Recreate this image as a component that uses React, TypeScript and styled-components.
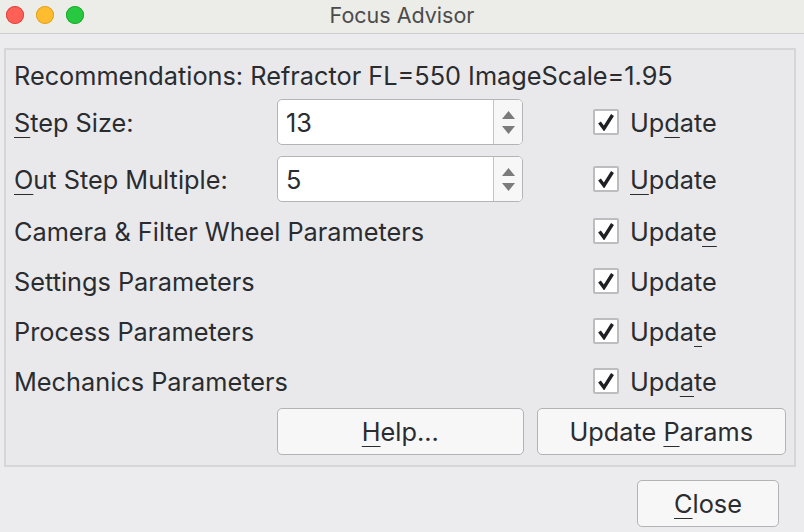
import React from 'react';
import styled, { createGlobalStyle } from 'styled-components';

const Global = createGlobalStyle`
  html, body { margin: 0; padding: 0; background: #ececee; }
  body { font-family: Inter, "Liberation Sans", sans-serif; }
  * { box-sizing: border-box; }
`;

const Window = styled.div`
  width: 804px;
  height: 532px;
  background: #ececee;
  display: flex;
  flex-direction: column;
  overflow: hidden;
  color: #2a2c30;
`;

const TitleBar = styled.div`
  position: relative;
  height: 34px;
  flex: none;
  background: #ececE8;
  border-bottom: 1px solid #cdcdcd;
  display: flex;
  align-items: center;
  justify-content: center;
`;

const Lights = styled.div`
  position: absolute;
  left: 6px;
  top: 6px;
  display: flex;
  gap: 12px;
`;

const Light = styled.span<{ $c: string; $b: string }>`
  width: 18px;
  height: 18px;
  border-radius: 50%;
  background: ${(p) => p.$c};
  box-shadow: inset 0 0 0 1px ${(p) => p.$b};
`;

const Title = styled.div`
  font-size: 21.5px;
  color: #4b4b4b;
  margin-top: -3px;
`;

const Body = styled.div`
  flex: 1;
  display: flex;
  flex-direction: column;
  padding: 14px 8px 0 4px;
`;

const Group = styled.div`
  border: 2px solid #d6d6d8;
  background: #e9e9eb;
  padding: 0 8px 10px 8px;
  display: flex;
  flex-direction: column;
`;

const Row = styled.div<{ $mt: number }>`
  display: grid;
  grid-template-columns: 263px 246px 1fr;
  align-items: center;
  height: 46px;
  margin-top: ${(p) => p.$mt}px;
  font-size: 25.3px;
`;

const Rec = styled.div`
  height: 46px;
  margin-top: 2px;
  display: flex;
  align-items: center;
  font-size: 25.3px;
`;

const Label = styled.div`
  grid-column: 1 / 3;
  white-space: nowrap;
`;

const LabelShort = styled.div`
  grid-column: 1;
  white-space: nowrap;
`;

const U = styled.span`
  text-decoration: underline;
  text-underline-offset: 5px;
  text-decoration-thickness: 1px;
`;

const Spin = styled.div`
  grid-column: 2;
  height: 46px;
  display: flex;
  background: #fff;
  border: 1px solid #b4b4b6;
  border-radius: 5px;
  overflow: hidden;
`;

const SpinValue = styled.div`
  flex: 1;
  display: flex;
  align-items: center;
  padding-left: 8px;
  font-size: 25.3px;
`;

const Stepper = styled.div`
  width: 29px;
  border-left: 1px solid #c4c4c6;
  background: #f7f7f7;
  display: flex;
  flex-direction: column;
  align-items: center;
  justify-content: center;
  gap: 7px;
`;

const Check = styled.label`
  grid-column: 3;
  display: flex;
  align-items: center;
  gap: 11px;
  padding-left: 70px;
`;

const Box = styled.span`
  width: 26px;
  height: 26px;
  border: 2px solid #bdbdbf;
  border-radius: 2px;
  background: #fff;
  display: flex;
  align-items: center;
  justify-content: center;
`;

const ButtonRow = styled.div`
  display: flex;
  gap: 13px;
  margin-top: 4px;
  padding-left: 263px;
`;

const Button = styled.button<{ $w: number }>`
  width: ${(p) => p.$w}px;
  height: 47px;
  font-family: inherit;
  font-size: 25.3px;
  color: #2a2c30;
  background: #f7f7f8;
  border: 1px solid #b3b3b5;
  border-radius: 5px;
  padding: 0;
`;

const Footer = styled.div`
  display: flex;
  justify-content: flex-end;
  padding: 13px 17px 0 0;
`;

const Arrow = ({ up }: { up?: boolean }) => (
  <svg width="13" height="8" viewBox="0 0 13 8">
    <path d={up ? 'M0 8 L6.5 0 L13 8 Z' : 'M0 0 L6.5 8 L13 0 Z'} fill="#7b7b7d" />
  </svg>
);

const Tick = () => (
  <svg width="18" height="18" viewBox="0 0 18 18">
    <path d="M2.5 9.5 L7 15.5 L15.5 2" fill="none" stroke="#1f2023" strokeWidth="3.4" strokeLinejoin="miter" />
  </svg>
);

const UpdateCheck = ({ pre, u, post }: { pre: string; u: string; post: string }) => (
  <Check>
    <Box>
      <Tick />
    </Box>
    <span>
      {pre}
      {u && <U>{u}</U>}
      {post}
    </span>
  </Check>
);

const SpinBox = ({ value }: { value: string }) => (
  <Spin>
    <SpinValue>{value}</SpinValue>
    <Stepper>
      <Arrow up />
      <Arrow />
    </Stepper>
  </Spin>
);

export default function App() {
  return (
    <Window>
      <Global />
      <TitleBar>
        <Lights>
          <Light $c="#fe5f57" $b="#e0443e" />
          <Light $c="#febc2e" $b="#dea123" />
          <Light $c="#28c840" $b="#1aab29" />
        </Lights>
        <Title>Focus Advisor</Title>
      </TitleBar>
      <Body>
        <Group>
          <Rec>Recommendations: Refractor FL=550 ImageScale=1.95</Rec>
          <Row $mt={1}>
            <LabelShort>
              <U>S</U>tep Size:
            </LabelShort>
            <SpinBox value="13" />
            <UpdateCheck pre="Up" u="d" post="ate" />
          </Row>
          <Row $mt={11}>
            <LabelShort>
              <U>O</U>ut Step Multiple:
            </LabelShort>
            <SpinBox value="5" />
            <UpdateCheck pre="" u="U" post="pdate" />
          </Row>
          <Row $mt={6}>
            <Label>Camera &amp; Filter Wheel Parameters</Label>
            <UpdateCheck pre="Updat" u="e" post="" />
          </Row>
          <Row $mt={4}>
            <Label>Settings Parameters</Label>
            <UpdateCheck pre="Update" u="" post="" />
          </Row>
          <Row $mt={4}>
            <Label>Process Parameters</Label>
            <UpdateCheck pre="Upda" u="t" post="e" />
          </Row>
          <Row $mt={4}>
            <Label>Mechanics Parameters</Label>
            <UpdateCheck pre="Upd" u="a" post="te" />
          </Row>
          <ButtonRow>
            <Button $w={247}>
              <U>H</U>elp...
            </Button>
            <Button $w={250}>
              Update <U>P</U>arams
            </Button>
          </ButtonRow>
        </Group>
        <Footer>
          <Button $w={142}>
            <U>C</U>lose
          </Button>
        </Footer>
      </Body>
    </Window>
  );
}
